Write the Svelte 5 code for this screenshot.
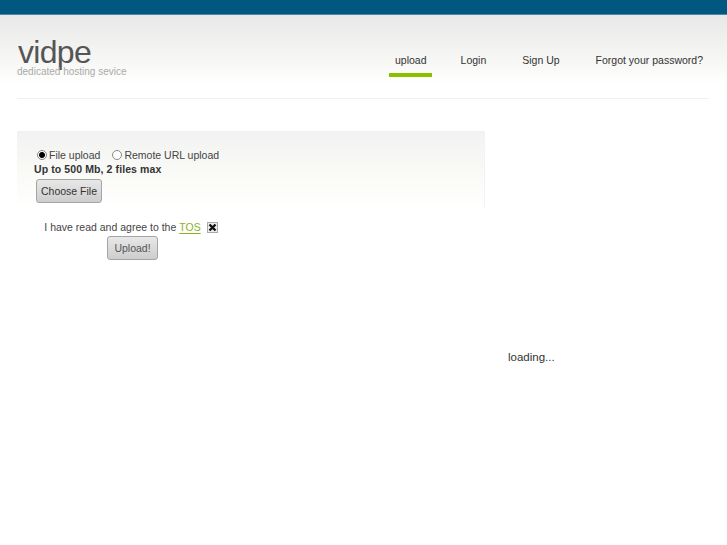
<script lang="ts">
    let source = $state('file')
    let agreed = $state(true)
    const nav = [
        { label: 'upload', active: true },
        { label: 'Login', active: false },
        { label: 'Sign Up', active: false },
        { label: 'Forgot your password?', active: false }
    ]
</script>

<div class="topbar"></div>

<header class="head">
    <div class="head-inner">
        <div class="logo">
            <div class="logo-name">vidpe</div>
            <div class="logo-sub">dedicated hosting sevice</div>
        </div>
        <nav class="nav">
            {#each nav as item}
                <a href="#top" class="nav-item" class:active={item.active}>{item.label}</a>
            {/each}
        </nav>
    </div>
</header>

<main class="main">
    <section class="left">
        <div class="panel">
            <div class="radios">
                <label class="radio">
                    <button type="button" class="dot" class:on={source === 'file'} onclick={() => (source = 'file')} aria-label="File upload"></button>
                    File upload
                </label>
                <label class="radio">
                    <button type="button" class="dot" class:on={source === 'url'} onclick={() => (source = 'url')} aria-label="Remote URL upload"></button>
                    Remote URL upload
                </label>
            </div>
            <div class="limit">Up to 500 Mb, 2 files max</div>
            <button type="button" class="btn">Choose File</button>
        </div>
        <div class="agree">
            <div class="tos">
                <span>I have read and agree to the</span>
                <a href="#top">TOS</a>
                <button type="button" class="check" onclick={() => (agreed = !agreed)} aria-label="Agree">
                    {#if agreed}
                        <svg viewBox="0 0 9 9" width="9" height="9"><path d="M1.5 1.5 7.5 7.5M7.5 1.5 1.5 7.5" stroke="#111" stroke-width="2.4" /></svg>
                    {/if}
                </button>
            </div>
            <button type="button" class="btn upload">Upload!</button>
        </div>
    </section>
    <aside class="side">loading...</aside>
</main>

<style>
    :global(body) {
        background: #fff;
        font-family: "Liberation Sans", Arial, sans-serif;
        font-size: 10.5px;
        color: #444;
    }

    .topbar {
        height: 15px;
        background: #005880;
        border-bottom: 1px solid #4a8aa8;
        box-sizing: border-box;
    }

    /* header */
    .head {
        height: 84px;
        padding: 0 18px 0 17px;
        background: linear-gradient(#e8e8e8, #f8f8f6 50px, #fff 68px);
    }
    .head-inner {
        height: 83px;
        display: flex;
        justify-content: space-between;
        border-bottom: 1px solid #f0f0f0;
    }
    .logo { padding-top: 21px; }
    .logo-name {
        padding-left: 1px;
        font-size: 32px;
        line-height: 32px;
        letter-spacing: -0.7px;
        color: #555;
    }
    .logo-sub {
        margin-top: -3px;
        font-size: 10px;
        line-height: 13px;
        color: #aaa;
    }
    .nav {
        display: flex;
        gap: 24px;
        padding-top: 33px;
        align-items: flex-start;
    }
    .nav-item {
        display: block;
        height: 25px;
        padding: 5px 6px 0;
        box-sizing: border-box;
        line-height: 14px;
        color: #333;
        text-decoration: none;
    }
    .nav-item.active {
        height: 29px;
        padding-right: 5px;
        margin-right: -1px;
        border-bottom: 4px solid #8cbe00;
    }

    /* main */
    .main {
        display: flex;
        padding: 32px 0 0 17px;
    }
    .left { width: 468px; flex-shrink: 0; }
    .panel {
        height: 76px;
        box-sizing: border-box;
        padding: 17px 0 0 17px;
        background: linear-gradient(#f2f2f2, #fafaf7 45px, #fff);
        border-right: 1px solid #f2f2f2;
    }
    .radios { display: flex; gap: 12px; padding-left: 3px; line-height: 14px; }
    .radio { display: flex; align-items: center; gap: 2px; }
    .dot {
        width: 10px;
        height: 10px;
        padding: 0;
        border: 1px solid #888;
        border-radius: 50%;
        background: #fff;
        box-sizing: border-box;
    }
    .dot.on { background: radial-gradient(circle, #000 2.5px, #fff 3.5px); }
    .limit { font-weight: bold; line-height: 14px; letter-spacing: 0.1px; color: #333; }
    .btn {
        display: block;
        height: 24px;
        padding: 0 4px;
        margin: 3px 0 0 2px;
        font: 10.5px "Liberation Sans", Arial, sans-serif;
        color: #333;
        background: linear-gradient(#e8e8e8, #cdcdcd);
        border: 1px solid #a5a5a5;
        border-radius: 3px;
    }
    .agree { width: 228px; display: flex; flex-direction: column; align-items: center; }
    .tos { display: flex; align-items: center; gap: 3px; height: 18px; margin-top: 11px; }
    .tos a {
        margin-right: 3px;
        color: #8ab31e;
        text-decoration: underline;
        text-underline-offset: 2px;
    }
    .check {
        width: 11px;
        height: 11px;
        padding: 0;
        display: flex;
        align-items: center;
        justify-content: center;
        background: #eee;
        border: 1px solid #aaa;
    }
    .upload { margin: 0 0 0 3px; padding: 0 6px; color: #555; }

    .side {
        margin: 219px 0 0 23px;
        font-size: 11.5px;
        line-height: 14px;
        color: #333;
    }
</style>
